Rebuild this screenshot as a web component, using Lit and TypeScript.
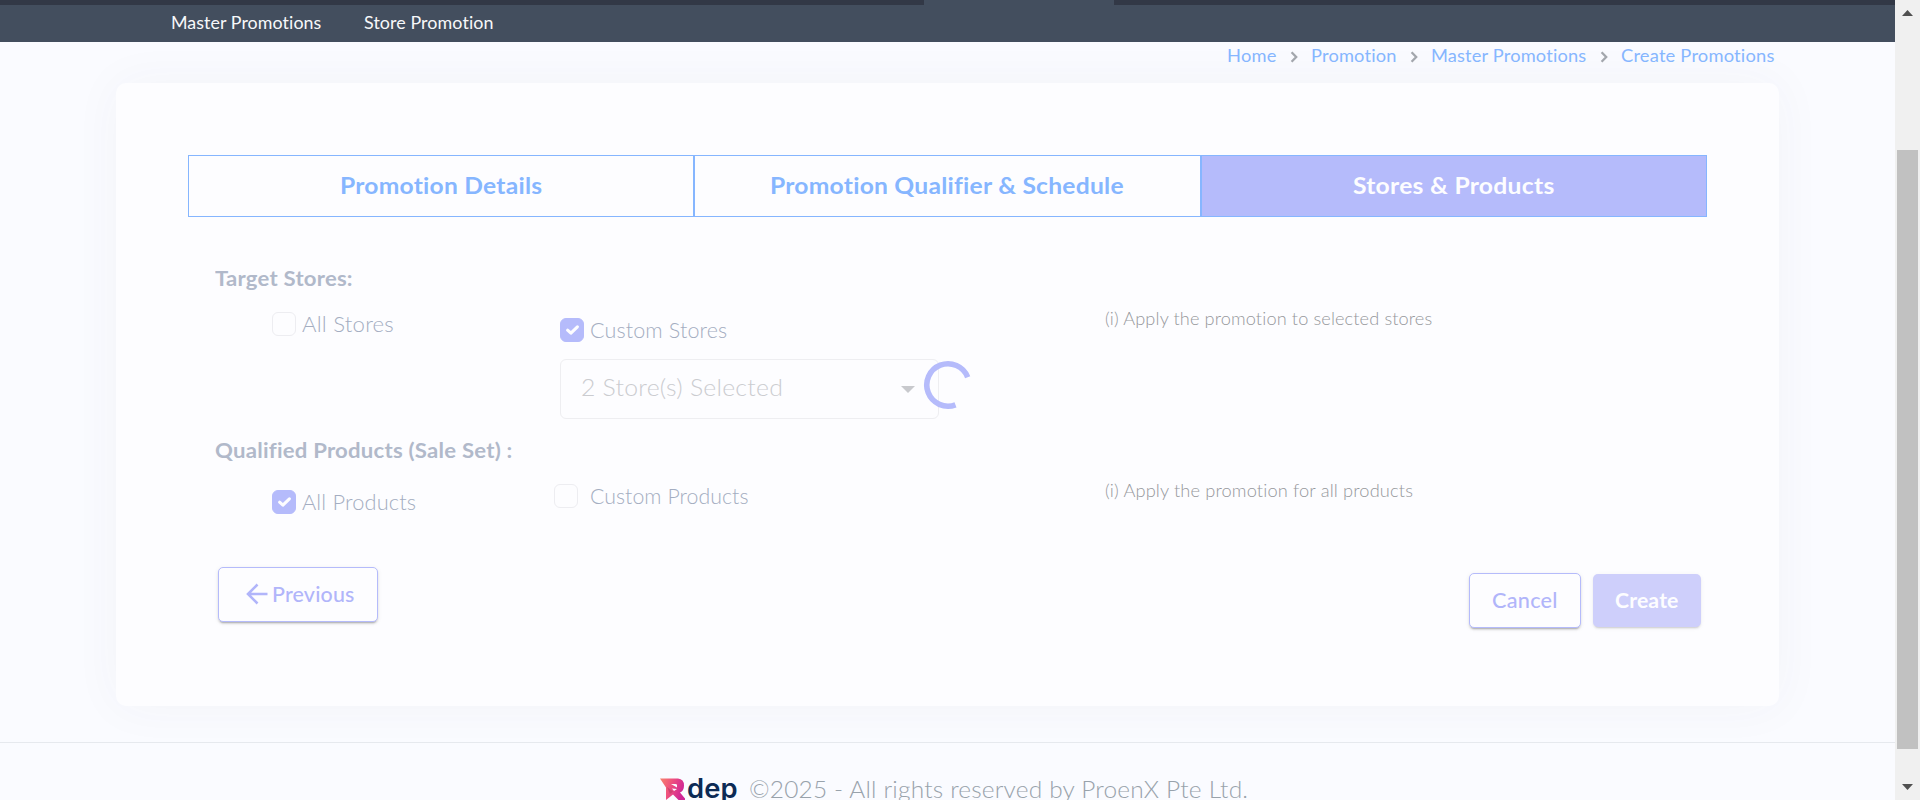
import { LitElement, html, css } from "lit";
import { customElement, property } from "lit/decorators.js";

/** A single line of text, widened and lightly tracked so that it fills a given width. */
@customElement("ui-text")
class UiText extends LitElement {
  @property({ type: Number }) w = 0;
  @property() text = "";

  static styles = css`
    :host { display: flex; white-space: nowrap; flex: none; }
    .run { flex: none; transform-origin: 0 50%; }
  `;

  updated() {
    const run = this.renderRoot.querySelector(".run") as HTMLElement;
    const natural = run.offsetWidth;
    const tracked = natural + (this.w - natural) * 0.3;
    run.style.letterSpacing = `${(tracked - natural) / this.text.length}px`;
    run.style.transform = `scaleX(${this.w / tracked})`;
    this.style.width = `${this.w}px`;
  }

  render() {
    return html`<span class="run">${this.text}</span>`;
  }
}

@customElement("ui-check")
class UiCheck extends LitElement {
  @property({ type: Boolean, reflect: true }) checked = false;

  static styles = css`
    :host {
      display: block; box-sizing: border-box; width: 24px; height: 24px; flex: none;
      border: 1px solid #ededf1; border-radius: 6px;
    }
    :host([checked]) { background: #b5bbfb; border-color: #b5bbfb; }
    svg { display: block; width: 22px; height: 22px; }
  `;

  render() {
    return this.checked
      ? html`<svg viewBox="0 0 22 22"><path d="M6.6 11.2 L9.9 14.2 L16.4 7.9" fill="none" stroke="#fdfdff" stroke-width="3.1" stroke-linecap="round" stroke-linejoin="round"/></svg>`
      : html``;
  }
}

const chevron = html`<svg class="chev" viewBox="0 0 8 12"><path d="M1.6 1.3 L6.2 6 L1.6 10.7" fill="none" stroke="#a3a7ad" stroke-width="2.3"/></svg>`;

@customElement("app-root")
class AppRoot extends LitElement {
  static styles = css`
    :host {
      display: flex; width: 1920px; height: 800px; overflow: hidden;
      font-family: Lato, "Open Sans", sans-serif; background: #fafbff;
    }
    .page { position: relative; width: 1895px; height: 800px; overflow: hidden; display: flex; flex-direction: column; }
    .strip { display: flex; height: 5px; flex: none; background: #434e5e; justify-content: space-between; }
    .strip-left { width: 924px; background: #323846; }
    .strip-right { width: 781px; background: #323846; }
    .nav {
      position: relative; z-index: 1; display: flex; gap: 42px; height: 37px; flex: none;
      padding-left: 171px; box-sizing: border-box;
      background: #434e5e; color: #f7f8fa; font-size: 17.5px; line-height: 35px;
    }
    .crumbs {
      position: relative; z-index: 1; display: flex; justify-content: flex-end; align-items: center;
      gap: 13px; height: 28px; margin-bottom: 13px; padding-right: 120px; flex: none;
      color: #86b6ff; font-size: 17.5px; line-height: 28px;
    }
    .chev { width: 8px; height: 12px; flex: none; margin-top: 1px; }
    .card {
      width: 1663px; height: 623px; flex: none; box-sizing: border-box; margin-left: 116px; padding: 72px;
      border-radius: 10px; background: #fdfdff; box-shadow: 0 0 50px rgba(60, 65, 90, 0.045);
    }
    .tabs { display: grid; grid-template-columns: repeat(3, 1fr); height: 62px; font-weight: 700; font-size: 23.5px; line-height: 58px; color: #86b6ff; }
    .tab { display: flex; justify-content: center; border: 1px solid #86b6ff; }
    .active { background: #b5bbfb; color: #fdfdff; }
    .heading { padding-left: 27px; font-size: 21px; font-weight: 700; line-height: 28px; color: #b1b9ca; }
    .first { margin-top: 47px; }
    .section { display: grid; grid-template-columns: 288px 545px 1fr; height: 144px; padding-left: 84px; }
    .second { height: 103px; }
    .option { display: flex; align-items: center; gap: 6px; height: 24px; margin-top: 20px; font-size: 21px; font-weight: 300; line-height: 24px; color: #a4adc1; }
    .option ui-text { margin-bottom: 1px; }
    .lower { margin-top: 26px; }
    .outset { gap: 12px; margin-left: -6px; }
    .select {
      display: flex; align-items: center; justify-content: space-between; box-sizing: border-box;
      width: 379px; height: 60px; margin-top: 17px; padding: 0 23px 4px 20px;
      border: 1px solid #eeeef1; border-radius: 6px; color: #cbccd0; font-size: 23.5px; font-weight: 300;
    }
    .caret { width: 14px; height: 7px; margin-top: 4px; }
    .info { padding-top: 15px; color: #96989c; font-size: 17.5px; font-weight: 300; line-height: 24px; }
    .actions { display: flex; align-items: flex-start; padding: 0 6px 0 30px; }
    .btn {
      display: flex; align-items: center; justify-content: center; box-sizing: border-box; height: 55px;
      border: 1px solid #b5bbfb; border-radius: 5px; color: #b1b5fa; font-size: 20.5px; font-weight: 500;
      background: #fdfdff; padding-bottom: 2px;
      box-shadow: 0 3px 1px -2px rgba(0,0,0,.16), 0 2px 2px rgba(0,0,0,.11), 0 1px 5px rgba(0,0,0,.07);
    }
    .previous { width: 160px; gap: 4px; padding-left: 5px; }
    .arrow { width: 22px; height: 22px; }
    .cancel { width: 112px; margin: 6px 12px 0 auto; }
    .create { width: 108px; height: 53px; margin-top: 7px; border: 0; background: #cecffb; color: #fdfdff; font-weight: 700;
      box-shadow: 0 3px 1px -2px rgba(0,0,0,.08), 0 2px 2px rgba(0,0,0,.06), 0 1px 5px rgba(0,0,0,.05); }
    .spinner { position: absolute; left: 923px; top: 360px; width: 50px; height: 50px; }
    .footer {
      position: relative; display: flex; flex: none; box-sizing: border-box; height: 80px; margin-top: 36px; padding: 26px 0 0 660px;
      border-top: 1px solid #e6e9ee; color: #98a2ab; font-size: 23.5px; font-weight: 300; line-height: 40px; background: #fafbff;
    }
    .mark { width: 26px; height: 24px; margin-top: 9px; }
    .brand { margin-left: 1px; width: 50px; color: #0c2a55; font: 600 27px/40px Inter, sans-serif; }
    .copy { margin-left: 12px; }
    .scroll { width: 25px; height: 800px; display: flex; flex-direction: column; align-items: center; background: #f0f0f0; }
    .tri { width: 11px; height: 6px; flex: none; }
    .up { margin: 10px 0 134px 0; }
    .thumb { width: 21px; height: 599px; margin-bottom: 35px; background: #c1c1c1; }
  `;

  render() {
    return html`
      <div class="page">
        <div class="strip"><div class="strip-left"></div><div class="strip-right"></div></div>
        <div class="nav">
          <ui-text w="151" text="Master Promotions"></ui-text>
          <ui-text w="130" text="Store Promotion"></ui-text>
        </div>
        <div class="crumbs">
          <ui-text w="50" text="Home"></ui-text>${chevron}
          <ui-text w="86" text="Promotion"></ui-text>${chevron}
          <ui-text w="156" text="Master Promotions"></ui-text>${chevron}
          <ui-text w="154" text="Create Promotions"></ui-text>
        </div>
        <div class="card">
          <div class="tabs">
            <div class="tab"><ui-text w="203" text="Promotion Details"></ui-text></div>
            <div class="tab"><ui-text w="354" text="Promotion Qualifier &amp; Schedule"></ui-text></div>
            <div class="tab active"><ui-text w="202" text="Stores &amp; Products"></ui-text></div>
          </div>
          <div class="heading first"><ui-text w="138" text="Target Stores:"></ui-text></div>
          <div class="section">
            <div><div class="option"><ui-check></ui-check><ui-text w="92" text="All Stores"></ui-text></div></div>
            <div>
              <div class="option lower"><ui-check checked></ui-check><ui-text w="137" text="Custom Stores"></ui-text></div>
              <div class="select">
                <ui-text w="202" text="2 Store(s) Selected"></ui-text>
                <svg class="caret" viewBox="0 0 14 7"><path d="M0 0H14L7 7Z" fill="#c8c9cd"/></svg>
              </div>
            </div>
            <div class="info"><ui-text w="328" text="(i) Apply the promotion to selected stores"></ui-text></div>
          </div>
          <div class="heading"><ui-text w="297" text="Qualified Products (Sale Set) :"></ui-text></div>
          <div class="section second">
            <div><div class="option lower"><ui-check checked></ui-check><ui-text w="114" text="All Products"></ui-text></div></div>
            <div><div class="option outset"><ui-check></ui-check><ui-text w="159" text="Custom Products"></ui-text></div></div>
            <div class="info"><ui-text w="308" text="(i) Apply the promotion for all products"></ui-text></div>
          </div>
          <div class="actions">
            <div class="btn previous">
              <svg class="arrow" viewBox="0 0 22 22"><path d="M11.5 1.5 L2 11 L11.5 20.5 M2 11 H21.5" fill="none" stroke="#b1b5fa" stroke-width="2.6"/></svg>
              <ui-text w="83" text="Previous"></ui-text>
            </div>
            <div class="btn cancel"><ui-text w="66" text="Cancel"></ui-text></div>
            <div class="btn create"><ui-text w="64" text="Create"></ui-text></div>
          </div>
        </div>
        <svg class="spinner" viewBox="0 0 50 50"><path d="M44.7 17.2 A21.2 21.2 0 1 0 32.5 44.8" fill="none" stroke="#b5bbfb" stroke-width="5.6"/></svg>
        <div class="footer">
          <svg class="mark" viewBox="0 0 26 24">
            <defs><linearGradient id="g" x1="0" y1="0" x2="1" y2="0.3"><stop offset="0" stop-color="#f7826c"/><stop offset=".5" stop-color="#ee4f7f"/><stop offset="1" stop-color="#cf2596"/></linearGradient></defs>
            <path fill="url(#g)" fill-rule="evenodd" d="M0 0.5H18Q24 1 24 7.5Q24 13 20 14.5L25 20.5V22H18.5L13 16.5L6 22V9.5ZM11 6L17 9.5V6.8Q16.5 6 15.5 6Z"/>
            <path fill="#b83a68" opacity=".6" d="M7 9L13 13.5L10 16Z"/>
            <path fill="#fafbff" d="M12 10.5L17 11L14 13Z"/>
          </svg>
          <div class="brand"><ui-text w="51" text="dep"></ui-text></div>
          <div class="copy"><ui-text w="499" text="©2025 - All rights reserved by ProenX Pte Ltd."></ui-text></div>
        </div>
      </div>
      <div class="scroll">
        <svg class="tri up" viewBox="0 0 11 6"><path d="M0 6H11L5.5 0Z" fill="#505050"/></svg>
        <div class="thumb"></div>
        <svg class="tri" viewBox="0 0 11 6"><path d="M0 0H11L5.5 6Z" fill="#505050"/></svg>
      </div>
    `;
  }
}
